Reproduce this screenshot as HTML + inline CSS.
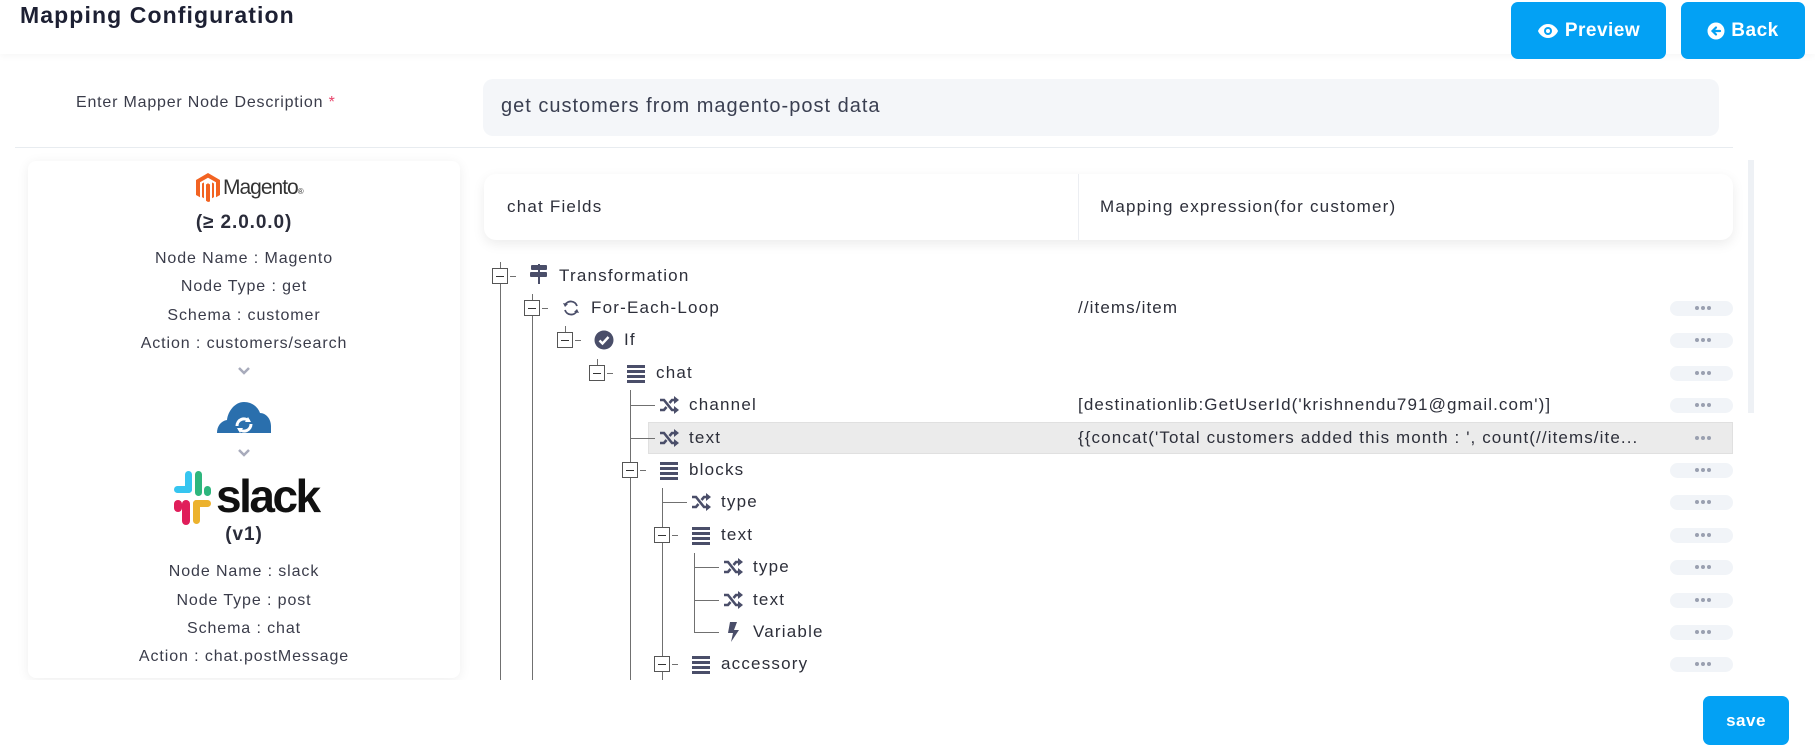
<!DOCTYPE html>
<html><head><meta charset="utf-8">
<style>
*{margin:0;padding:0;box-sizing:border-box}
body{width:1815px;height:752px;background:#fff;font-family:"Liberation Sans",sans-serif;color:#2d2f3a;position:relative;overflow:hidden}
.a{position:absolute}
.btn{position:absolute;background:#03a1f4;color:#fff;border-radius:7px;font-weight:bold;font-size:19px;display:flex;align-items:center;justify-content:center;gap:6px;letter-spacing:0.5px}
.info{position:absolute;left:28px;width:432px;text-align:center;font-size:16px;color:#3a3c4a;letter-spacing:0.9px}
.t{position:absolute;font-size:17px;color:#2d2f3a;line-height:20px;white-space:nowrap;letter-spacing:1.2px}
.e{position:absolute;left:1078px;font-size:17px;color:#2d2f3a;line-height:20px;white-space:nowrap;letter-spacing:1.1px}
.vl{position:absolute;width:1px;background:#707070}
.hl{position:absolute;height:1px;background:#707070}
.bx{position:absolute;width:16px;height:16px;border:1px solid #555;background:#fff}
.bx:after{content:"";position:absolute;left:3px;right:3px;top:7px;height:1px;background:#333}
.dots{position:absolute;left:1670px;width:63px;height:15px;border-radius:8px;background:#f1f4f8}
.dots:after{content:"";position:absolute;left:25px;top:5px;width:4px;height:4px;border-radius:50%;background:#9aa0b0;box-shadow:6px 0 #9aa0b0,12px 0 #9aa0b0}
.ic{position:absolute;width:20px;height:20px}
</style></head><body>

<div class="a" style="left:0;top:0;width:1815px;height:54px;background:#fff;box-shadow:0 3px 6px rgba(0,0,0,0.03)"></div>
<div class="a" style="left:20px;top:2px;font-size:23px;font-weight:bold;color:#1d2033;letter-spacing:1.1px">Mapping Configuration</div>
<div class="btn" style="left:1511px;top:2px;width:155px;height:57px">
<svg width="22" height="16" viewBox="0 0 22 16"><path d="M11 1C6 1 2 5 1 8c1 3 5 7 10 7s9-4 10-7c-1-3-5-7-10-7z" fill="#fff"/><circle cx="11" cy="8" r="4" fill="#03a1f4"/><circle cx="11" cy="8" r="2" fill="#fff"/></svg>Preview</div>
<div class="btn" style="left:1681px;top:2px;width:124px;height:57px">
<svg width="18" height="18" viewBox="0 0 18 18"><circle cx="9" cy="9" r="8.5" fill="#fff"/><path d="M13 9H6M9 5.5L5.5 9 9 12.5" stroke="#03a1f4" stroke-width="2.2" fill="none" stroke-linecap="round"/></svg>Back</div>

<div class="a" style="left:76px;top:94px;font-size:16px;color:#3a3c4a;letter-spacing:0.8px">Enter Mapper Node Description <span style="color:#e8436a">*</span></div>
<div class="a" style="left:483px;top:79px;width:1236px;height:57px;background:#f4f6f9;border-radius:10px"></div>
<div class="a" style="left:501px;top:95px;font-size:20px;color:#3a3f51;letter-spacing:1px">get customers from magento-post data</div>
<div class="a" style="left:15px;top:147px;width:1718px;height:1px;background:#e8ecf0"></div>

<div class="a" style="left:28px;top:161px;width:432px;height:517px;background:#fff;border-radius:8px;box-shadow:0 2px 12px rgba(0,0,0,0.07)"></div>
<svg class="a" style="left:196px;top:173px" width="24" height="29" viewBox="0 0 24 29"><path d="M12 0L0 7v15l4 2.3V9.3l8-4.6 8 4.6v15L24 22V7z" fill="#f26322"/><path d="M10 11.5l2-1.2 2 1.2v17L12 29l-2-1.2z" fill="#f26322"/><path d="M6 10.5l2-1.1v15.9l-2-1.2zM16 9.4l2 1.1v13.6l-2 1.2z" fill="#f26322"/></svg>
<div class="a" style="left:223px;top:176px;font-size:21px;color:#333;letter-spacing:-1px">Magento<span style="font-size:8px">®</span></div>
<div class="info" style="top:212px;font-size:19px;font-weight:bold;color:#2a2c3a">(≥ 2.0.0.0)</div>
<div class="info" style="top:250px">Node Name : Magento</div>
<div class="info" style="top:278px">Node Type : get</div>
<div class="info" style="top:307px">Schema : customer</div>
<div class="info" style="top:335px">Action : customers/search</div>
<svg class="a" style="left:237px;top:366px" width="14" height="9" viewBox="0 0 14 9"><path d="M2 2l5 5 5-5" stroke="#a8abbb" stroke-width="2.5" fill="none"/></svg>
<svg class="a" style="left:217px;top:400px" width="54" height="33" viewBox="0 0 54 33"><path d="M0 33C0 26 4 21 10 20 11 11 18 2 27 2 35 2 41 7 43 13 49 13 54 19 54 26V33z" fill="#2a6fad"/><path d="M20 26a7 7 0 0 1 12-5" stroke="#fff" stroke-width="3" fill="none"/><path d="M34 24a7 7 0 0 1-12 5" stroke="#fff" stroke-width="3" fill="none"/><path d="M31 17l3 5-6 0z" fill="#fff"/><path d="M23 33l-3-5 6 0z" fill="#fff"/></svg>
<svg class="a" style="left:237px;top:448px" width="14" height="9" viewBox="0 0 14 9"><path d="M2 2l5 5 5-5" stroke="#a8abbb" stroke-width="2.5" fill="none"/></svg>
<svg class="a" style="left:174px;top:471px" width="37" height="55" viewBox="0 0 37 55"><rect x="11" y="0" width="7" height="22" rx="3.5" fill="#36c5f0"/><rect x="0" y="15" width="18" height="7" rx="3.5" fill="#36c5f0"/><rect x="21" y="0" width="7" height="25" rx="3.5" fill="#2eb67d"/><rect x="30" y="15" width="7" height="10" rx="3.5" fill="#2eb67d"/><rect x="19" y="29" width="18" height="7" rx="3.5" fill="#ecb22e"/><rect x="19" y="29" width="7" height="24" rx="3.5" fill="#ecb22e"/><rect x="8" y="29" width="8" height="25" rx="4" fill="#e01e5a"/><rect x="0" y="29" width="8" height="12" rx="4" fill="#e01e5a"/></svg>
<div class="a" style="left:216px;top:468px;font-size:46px;font-weight:bold;color:#111;letter-spacing:-2.5px;line-height:56px">slack</div>
<div class="info" style="top:524px;font-size:19px;font-weight:bold;color:#2a2c3a">(v1)</div>
<div class="info" style="top:563px">Node Name : slack</div>
<div class="info" style="top:592px">Node Type : post</div>
<div class="info" style="top:620px">Schema : chat</div>
<div class="info" style="top:648px">Action : chat.postMessage</div>

<div class="a" style="left:1748px;top:160px;width:6px;height:253px;background:#eef1f5"></div>
<div class="a" style="left:484px;top:174px;width:1249px;height:66px;background:#fff;border-radius:12px;box-shadow:0 4px 12px rgba(0,0,0,0.08)"></div>
<div class="a" style="left:1078px;top:174px;width:1px;height:66px;background:#eceef2"></div>
<div class="t" style="left:507px;top:197px">chat Fields</div>
<div class="t" style="left:1100px;top:197px">Mapping expression(for customer)</div>

<div class="a" style="left:648px;top:422px;width:1085px;height:32px;background:#ebebeb;border:1px solid #e0e0e0"></div>

<div class="vl" style="left:500px;top:262px;height:418px"></div>
<div class="vl" style="left:532px;top:294px;height:386px"></div>
<div class="vl" style="left:565px;top:326px;height:8px"></div>
<div class="vl" style="left:597px;top:359px;height:8px"></div>
<div class="vl" style="left:630px;top:390px;height:290px"></div>
<div class="vl" style="left:662px;top:488px;height:192px"></div>
<div class="vl" style="left:694px;top:553px;height:79px"></div>

<div class="hl" style="left:510px;top:276px;width:6px"></div>
<div class="hl" style="left:542px;top:308px;width:6px"></div>
<div class="hl" style="left:575px;top:340px;width:6px"></div>
<div class="hl" style="left:607px;top:373px;width:6px"></div>
<div class="hl" style="left:630px;top:405px;width:25px"></div>
<div class="hl" style="left:630px;top:438px;width:25px"></div>
<div class="hl" style="left:640px;top:470px;width:6px"></div>
<div class="hl" style="left:662px;top:502px;width:25px"></div>
<div class="hl" style="left:672px;top:535px;width:6px"></div>
<div class="hl" style="left:694px;top:567px;width:25px"></div>
<div class="hl" style="left:694px;top:600px;width:25px"></div>
<div class="hl" style="left:694px;top:632px;width:25px"></div>
<div class="hl" style="left:672px;top:664px;width:6px"></div>

<div class="bx" style="left:492px;top:268px"></div>
<div class="bx" style="left:524px;top:300px"></div>
<div class="bx" style="left:557px;top:332px"></div>
<div class="bx" style="left:589px;top:365px"></div>
<div class="bx" style="left:622px;top:462px"></div>
<div class="bx" style="left:654px;top:527px"></div>
<div class="bx" style="left:654px;top:656px"></div>

<svg class="ic" style="left:529px;top:264px" viewBox="0 0 20 20"><rect x="2" y="1" width="16" height="5" rx="1" fill="#4a4e69"/><rect x="1" y="8" width="17" height="5" rx="1" fill="#4a4e69"/><rect x="9" y="0" width="2" height="20" fill="#4a4e69"/></svg>
<svg class="ic" style="left:561px;top:298px" viewBox="0 0 20 20"><path d="M16 8A6.5 6.5 0 0 0 4 7" stroke="#4a4e69" stroke-width="1.8" fill="none"/><path d="M4 12a6.5 6.5 0 0 0 12 1" stroke="#4a4e69" stroke-width="1.8" fill="none"/><path d="M2 5l2 4 3-3z" fill="#4a4e69"/><path d="M18 15l-2-4-3 3z" fill="#4a4e69"/></svg>
<svg class="ic" style="left:594px;top:330px" viewBox="0 0 20 20"><circle cx="10" cy="10" r="9.5" fill="#4a4e69"/><path d="M5.5 10.5l3 3 6-6.5" stroke="#fff" stroke-width="2.4" fill="none"/></svg>
<svg class="ic" style="left:626px;top:363px" viewBox="0 0 20 20"><rect x="1" y="2" width="18" height="3" fill="#4a4e69"/><rect x="1" y="7" width="18" height="3" fill="#4a4e69"/><rect x="1" y="12" width="18" height="3" fill="#4a4e69"/><rect x="1" y="17" width="18" height="3" fill="#4a4e69"/></svg>
<svg class="ic" style="left:659px;top:460px" viewBox="0 0 20 20"><rect x="1" y="2" width="18" height="3" fill="#4a4e69"/><rect x="1" y="7" width="18" height="3" fill="#4a4e69"/><rect x="1" y="12" width="18" height="3" fill="#4a4e69"/><rect x="1" y="17" width="18" height="3" fill="#4a4e69"/></svg>
<svg class="ic" style="left:691px;top:525px" viewBox="0 0 20 20"><rect x="1" y="2" width="18" height="3" fill="#4a4e69"/><rect x="1" y="7" width="18" height="3" fill="#4a4e69"/><rect x="1" y="12" width="18" height="3" fill="#4a4e69"/><rect x="1" y="17" width="18" height="3" fill="#4a4e69"/></svg>
<svg class="ic" style="left:691px;top:654px" viewBox="0 0 20 20"><rect x="1" y="2" width="18" height="3" fill="#4a4e69"/><rect x="1" y="7" width="18" height="3" fill="#4a4e69"/><rect x="1" y="12" width="18" height="3" fill="#4a4e69"/><rect x="1" y="17" width="18" height="3" fill="#4a4e69"/></svg>
<svg class="ic" style="left:659px;top:395px" viewBox="0 0 20 20"><path d="M1 5h4l8 10h3M1 15h4l2.5-3M10.5 8L13 5h3" stroke="#4a4e69" stroke-width="2.6" fill="none"/><path d="M15 1l5 4-5 4zM15 11l5 4-5 4z" fill="#4a4e69"/></svg>
<svg class="ic" style="left:659px;top:428px" viewBox="0 0 20 20"><path d="M1 5h4l8 10h3M1 15h4l2.5-3M10.5 8L13 5h3" stroke="#4a4e69" stroke-width="2.6" fill="none"/><path d="M15 1l5 4-5 4zM15 11l5 4-5 4z" fill="#4a4e69"/></svg>
<svg class="ic" style="left:691px;top:492px" viewBox="0 0 20 20"><path d="M1 5h4l8 10h3M1 15h4l2.5-3M10.5 8L13 5h3" stroke="#4a4e69" stroke-width="2.6" fill="none"/><path d="M15 1l5 4-5 4zM15 11l5 4-5 4z" fill="#4a4e69"/></svg>
<svg class="ic" style="left:723px;top:557px" viewBox="0 0 20 20"><path d="M1 5h4l8 10h3M1 15h4l2.5-3M10.5 8L13 5h3" stroke="#4a4e69" stroke-width="2.6" fill="none"/><path d="M15 1l5 4-5 4zM15 11l5 4-5 4z" fill="#4a4e69"/></svg>
<svg class="ic" style="left:723px;top:590px" viewBox="0 0 20 20"><path d="M1 5h4l8 10h3M1 15h4l2.5-3M10.5 8L13 5h3" stroke="#4a4e69" stroke-width="2.6" fill="none"/><path d="M15 1l5 4-5 4zM15 11l5 4-5 4z" fill="#4a4e69"/></svg>
<svg class="ic" style="left:723px;top:622px" viewBox="0 0 20 20"><path d="M7 0h7l-3 8h5L8 20l2-9H5z" fill="#4a4e69"/></svg>

<div class="t" style="left:559px;top:266px">Transformation</div>
<div class="t" style="left:591px;top:298px">For-Each-Loop</div>
<div class="t" style="left:624px;top:330px">If</div>
<div class="t" style="left:656px;top:363px">chat</div>
<div class="t" style="left:689px;top:395px">channel</div>
<div class="t" style="left:689px;top:428px">text</div>
<div class="t" style="left:689px;top:460px">blocks</div>
<div class="t" style="left:721px;top:492px">type</div>
<div class="t" style="left:721px;top:525px">text</div>
<div class="t" style="left:753px;top:557px">type</div>
<div class="t" style="left:753px;top:590px">text</div>
<div class="t" style="left:753px;top:622px">Variable</div>
<div class="t" style="left:721px;top:654px">accessory</div>

<div class="e" style="top:298px">//items/item</div>
<div class="e" style="top:395px">[destinationlib:GetUserId('krishnendu791@gmail.com')]</div>
<div class="e" style="top:428px">{{concat('Total customers added this month : ', count(//items/ite...</div>

<div class="dots" style="top:301px"></div>
<div class="dots" style="top:333px"></div>
<div class="dots" style="top:366px"></div>
<div class="dots" style="top:398px"></div>
<div class="dots" style="top:431px;background:transparent"></div>
<div class="dots" style="top:463px"></div>
<div class="dots" style="top:495px"></div>
<div class="dots" style="top:528px"></div>
<div class="dots" style="top:560px"></div>
<div class="dots" style="top:593px"></div>
<div class="dots" style="top:625px"></div>
<div class="dots" style="top:657px"></div>

<div class="a" style="left:0;top:680px;width:1815px;height:16px;background:#fff"></div>
<div class="btn" style="left:1703px;top:696px;width:86px;height:49px;font-size:17px">save</div>
</body></html>
